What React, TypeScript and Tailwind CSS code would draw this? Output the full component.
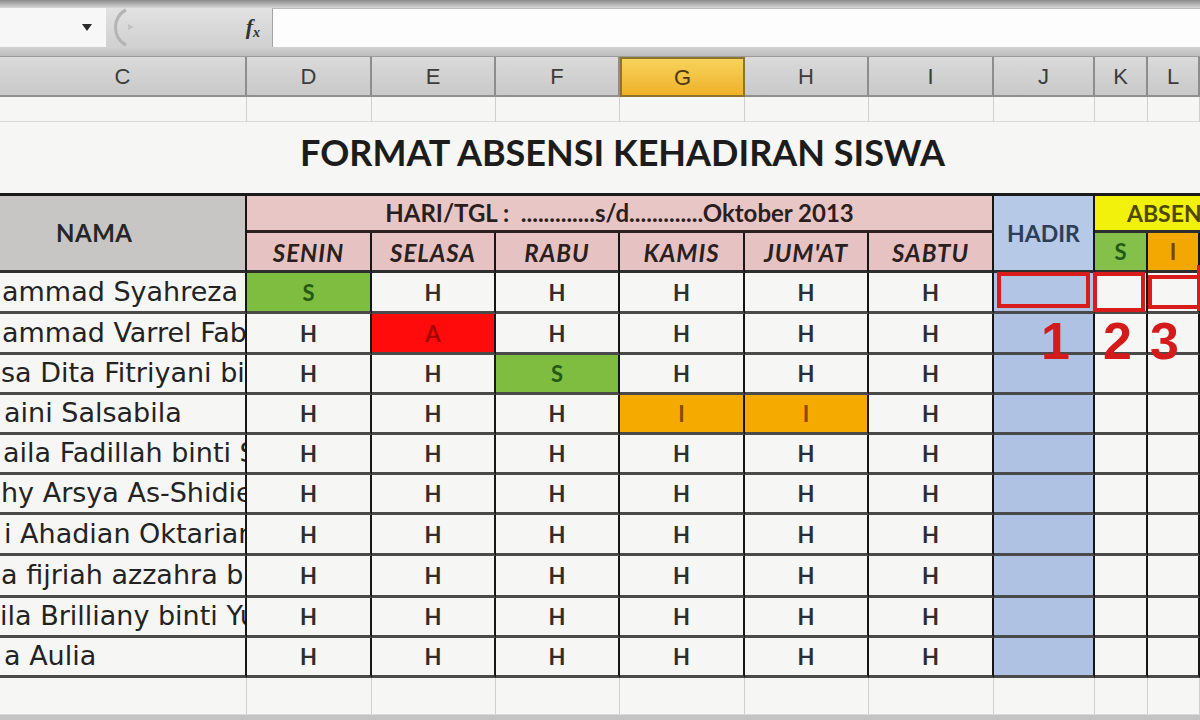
import React from 'react';

const GRID = 'grid grid-cols-[247px_125px_124px_124px_125px_124px_125px_101px_53px_52px_140px]';

type Mark = 'H' | 'S' | 'A' | 'I';

const markStyle: Record<Mark, string> = {
  H: 'text-[#2e2e2e]',
  S: 'bg-[#7fbd40] text-[#245a14]',
  A: 'bg-[#ff0b0b] text-[#a80000]',
  I: 'bg-[#f5aa00] text-[#8a4800]',
};

const students: { name: string; pad: string; h: string; marks: Mark[] }[] = [
  { name: 'ammad Syahreza', pad: 'pl-[2px]', h: 'h-[41px]', marks: ['S', 'H', 'H', 'H', 'H', 'H'] },
  { name: 'ammad Varrel Fabian', pad: 'pl-[2px]', h: 'h-[41px]', marks: ['H', 'A', 'H', 'H', 'H', 'H'] },
  { name: 'sa Dita Fitriyani binti', pad: 'pl-[1px]', h: 'h-[40px]', marks: ['H', 'H', 'S', 'H', 'H', 'H'] },
  { name: 'aini Salsabila', pad: 'pl-[4px]', h: 'h-[40px]', marks: ['H', 'H', 'H', 'I', 'I', 'H'] },
  { name: 'aila Fadillah binti Sa', pad: 'pl-[3px]', h: 'h-[40px]', marks: ['H', 'H', 'H', 'H', 'H', 'H'] },
  { name: 'hy Arsya As-Shidieqy', pad: 'pl-[1px]', h: 'h-[40px]', marks: ['H', 'H', 'H', 'H', 'H', 'H'] },
  { name: 'i Ahadian Oktariansyah', pad: 'pl-[4px]', h: 'h-[41px]', marks: ['H', 'H', 'H', 'H', 'H', 'H'] },
  { name: 'a fijriah azzahra binti', pad: 'pl-[1px]', h: 'h-[42px]', marks: ['H', 'H', 'H', 'H', 'H', 'H'] },
  { name: 'ila Brilliany binti Yusuf', pad: 'pl-[0px]', h: 'h-[40px]', marks: ['H', 'H', 'H', 'H', 'H', 'H'] },
  { name: 'a Aulia', pad: 'pl-[4px]', h: 'h-[40px]', marks: ['H', 'H', 'H', 'H', 'H', 'H'] },
];

const columns = ['C', 'D', 'E', 'F', 'G', 'H', 'I', 'J', 'K', 'L', 'M'];
const days = ['SENIN', 'SELASA', 'RABU', 'KAMIS', "JUM'AT", 'SABTU'];

const vline = 'border-r-2 border-r-[#161616]';
const hline = 'border-b-[3px] border-b-[#4a4a4a]';
const calibri = "font-['Lato','Liberation_Sans',sans-serif] font-bold";

function FormulaBar() {
  return (
    <>
      <div className="h-[8px] bg-gradient-to-b from-[#8c8c8c] to-[#d6d6d6]" />
      <div className="flex h-[39px]">
        <div className="w-[106px] bg-[#f7f7f7] flex items-center justify-end pr-[14px]">
          <svg width="10" height="7" viewBox="0 0 10 7">
            <polygon points="0,0 10,0 5,7" fill="#2a2a2a" />
          </svg>
        </div>
        <div className="w-[166px] bg-gradient-to-b from-[#e2e2e2] to-[#d0d0d0] flex items-center">
          <svg width="28" height="39" viewBox="0 0 28 39" className="shrink-0">
            <path d="M20 2 C6 8 6 31 20 37" fill="none" stroke="#b4b4b4" strokeWidth="3" />
            <path d="M22 16 l6 3 l-6 3 z" fill="#c2c2c2" />
          </svg>
          <span className="ml-auto mr-[12px] font-['Liberation_Serif',serif] italic font-bold text-[22px] text-[#333] leading-none">
            f<span className="text-[14px] align-[-3px]">x</span>
          </span>
        </div>
        <div className="flex-1 bg-[#fdfdfd] border-l border-l-[#a3a3a3] border-t border-t-[#bdbdbd]" />
      </div>
      <div className="h-[10px] bg-gradient-to-b from-[#d2d2d2] to-[#bcbcbc] border-b border-b-[#9a9a9a]" />
    </>
  );
}

function ColumnHeaders() {
  return (
    <div className={`${GRID} h-[40px]`}>
      {columns.map((c) =>
        c === 'G' ? (
          <div
            key={c}
            className="flex items-center justify-center bg-gradient-to-b from-[#f7d35a] to-[#efb126] border-2 border-[#8f7430] text-[22px] text-[#4a3a10] font-['Liberation_Sans',sans-serif]"
          >
            {c}
          </div>
        ) : (
          <div
            key={c}
            className="flex items-center justify-center bg-gradient-to-b from-[#dadada] to-[#c9c9c9] border-r-2 border-r-[#8d8d8d] border-b-2 border-b-[#8f8f8f] text-[22px] text-[#3c3c3c] font-['Liberation_Sans',sans-serif]"
          >
            {c}
          </div>
        )
      )}
    </div>
  );
}

function EmptyRow({ h }: { h: string }) {
  return (
    <div className={`${GRID} ${h}`}>
      {columns.map((c) => (
        <div key={c} className="border-r border-r-[#cfcfcf] border-b border-b-[#dadada]" />
      ))}
    </div>
  );
}

function TableHeader() {
  return (
    <div className={`${GRID} grid-rows-[37px_40px] border-t-[3px] border-t-[#1a1a1a] ${calibri}`}>
      <div className={`row-span-2 bg-[#c7c6c4] ${vline} border-b-[3px] border-b-[#2e2e2e] flex items-center pl-[56px] text-[24px] tracking-[0.5px] text-[#262626]`}>
        NAMA
      </div>
      <div className={`col-span-6 bg-[#e8c6c5] ${vline} border-b-[3px] border-b-[#2c2020] flex items-center justify-center text-[24px] text-[#2b1e1e] whitespace-nowrap`}>
        HARI/TGL :&nbsp;&nbsp;.............s/d.............Oktober 2013
      </div>
      <div className={`row-span-2 bg-[#b6c9e7] ${vline} border-b-[3px] border-b-[#2e2e2e] flex items-center justify-center text-[23px] text-[#2d3e58]`}>
        HADIR
      </div>
      <div className="col-span-3 bg-[#f1f10c] border-b-[3px] border-b-[#2e2e2e] flex items-center pl-[32px] text-[23px] text-[#4f4800] overflow-hidden whitespace-nowrap">
        ABSENSI
      </div>
      {days.map((d) => (
        <div
          key={d}
          className={`bg-[#e6c3c2] ${vline} border-b-[3px] border-b-[#2e2e2e] flex items-center justify-center pt-[3px] italic text-[24px] tracking-[1px] text-[#2a2020]`}
        >
          {d}
        </div>
      ))}
      <div className={`bg-[#84c04a] ${vline} border-b-[3px] border-b-[#2e2e2e] flex items-center justify-center text-[22px] text-[#1f5c14]`}>
        S
      </div>
      <div className={`bg-[#f2a800] ${vline} border-b-[3px] border-b-[#2e2e2e] flex items-center justify-center text-[22px] text-[#7a4200]`}>
        I
      </div>
      <div className={`bg-[#ff1010] border-b-[3px] border-b-[#2e2e2e]`} />
    </div>
  );
}

function RedBox({ className }: { className: string }) {
  return <div className={`absolute border-[4px] border-[#d81c1c] ${className}`} />;
}

function Digit({ value, className }: { value: string; className: string }) {
  return (
    <span
      className={`absolute z-10 top-[1px] leading-none font-['Liberation_Sans',sans-serif] font-bold text-[52px] text-[#d41a1a] ${className}`}
    >
      {value}
    </span>
  );
}

function StudentRow({ row, index }: { row: (typeof students)[number]; index: number }) {
  return (
    <div className={`${GRID} ${row.h}`}>
      <div
        className={`${vline} ${hline} ${row.pad} flex items-center overflow-hidden whitespace-nowrap font-['DejaVu_Sans',sans-serif] text-[27px] text-[#232323]`}
      >
        {row.name}
      </div>
      {row.marks.map((m, i) => (
        <div
          key={i}
          className={`${vline} ${hline} ${markStyle[m]} flex items-center justify-center ${calibri} text-[22px]`}
        >
          {m}
        </div>
      ))}
      <div className={`${vline} ${hline} bg-[#afc2e3] relative`}>
        {index === 0 && <RedBox className="left-[3px] right-[3px] top-[-1px] bottom-[3px] bg-[#b3c5e5]" />}
        {index === 1 && <Digit value="1" className="left-[47px]" />}
      </div>
      <div className={`${vline} ${hline} relative`}>
        {index === 0 && <RedBox className="left-[-2px] right-[1px] top-[-1px] bottom-[-1px]" />}
        {index === 1 && <Digit value="2" className="left-[8px]" />}
      </div>
      <div className={`${vline} ${hline} relative`}>
        {index === 0 && <RedBox className="left-[0px] right-[-4px] top-[2px] bottom-[2px]" />}
        {index === 1 && <Digit value="3" className="left-[2px]" />}
      </div>
      <div className={`${hline} relative`}>
        {index === 0 && <RedBox className="left-[-3px] right-[-10px] top-[-8px] bottom-[0px]" />}
      </div>
    </div>
  );
}

export default function App() {
  return (
    <div className="w-[1200px] h-[720px] overflow-hidden bg-[#f6f6f4]">
      <div className="w-[1340px]">
        <FormulaBar />
        <ColumnHeaders />
        <EmptyRow h="h-[25px]" />
        <div className="h-[71px] flex items-center pl-[300px] pb-[12px]">
          <span className="w-[640px] text-center font-['Lato','Liberation_Sans',sans-serif] font-bold text-[36px] text-[#1c1c1c] whitespace-nowrap">
            FORMAT ABSENSI KEHADIRAN SISWA
          </span>
        </div>
        <TableHeader />
        {students.map((s, i) => (
          <StudentRow key={i} row={s} index={i} />
        ))}
        <EmptyRow h="h-[37px]" />
        <div className="h-[10px] bg-[#c4c4c4]" />
      </div>
    </div>
  );
}
